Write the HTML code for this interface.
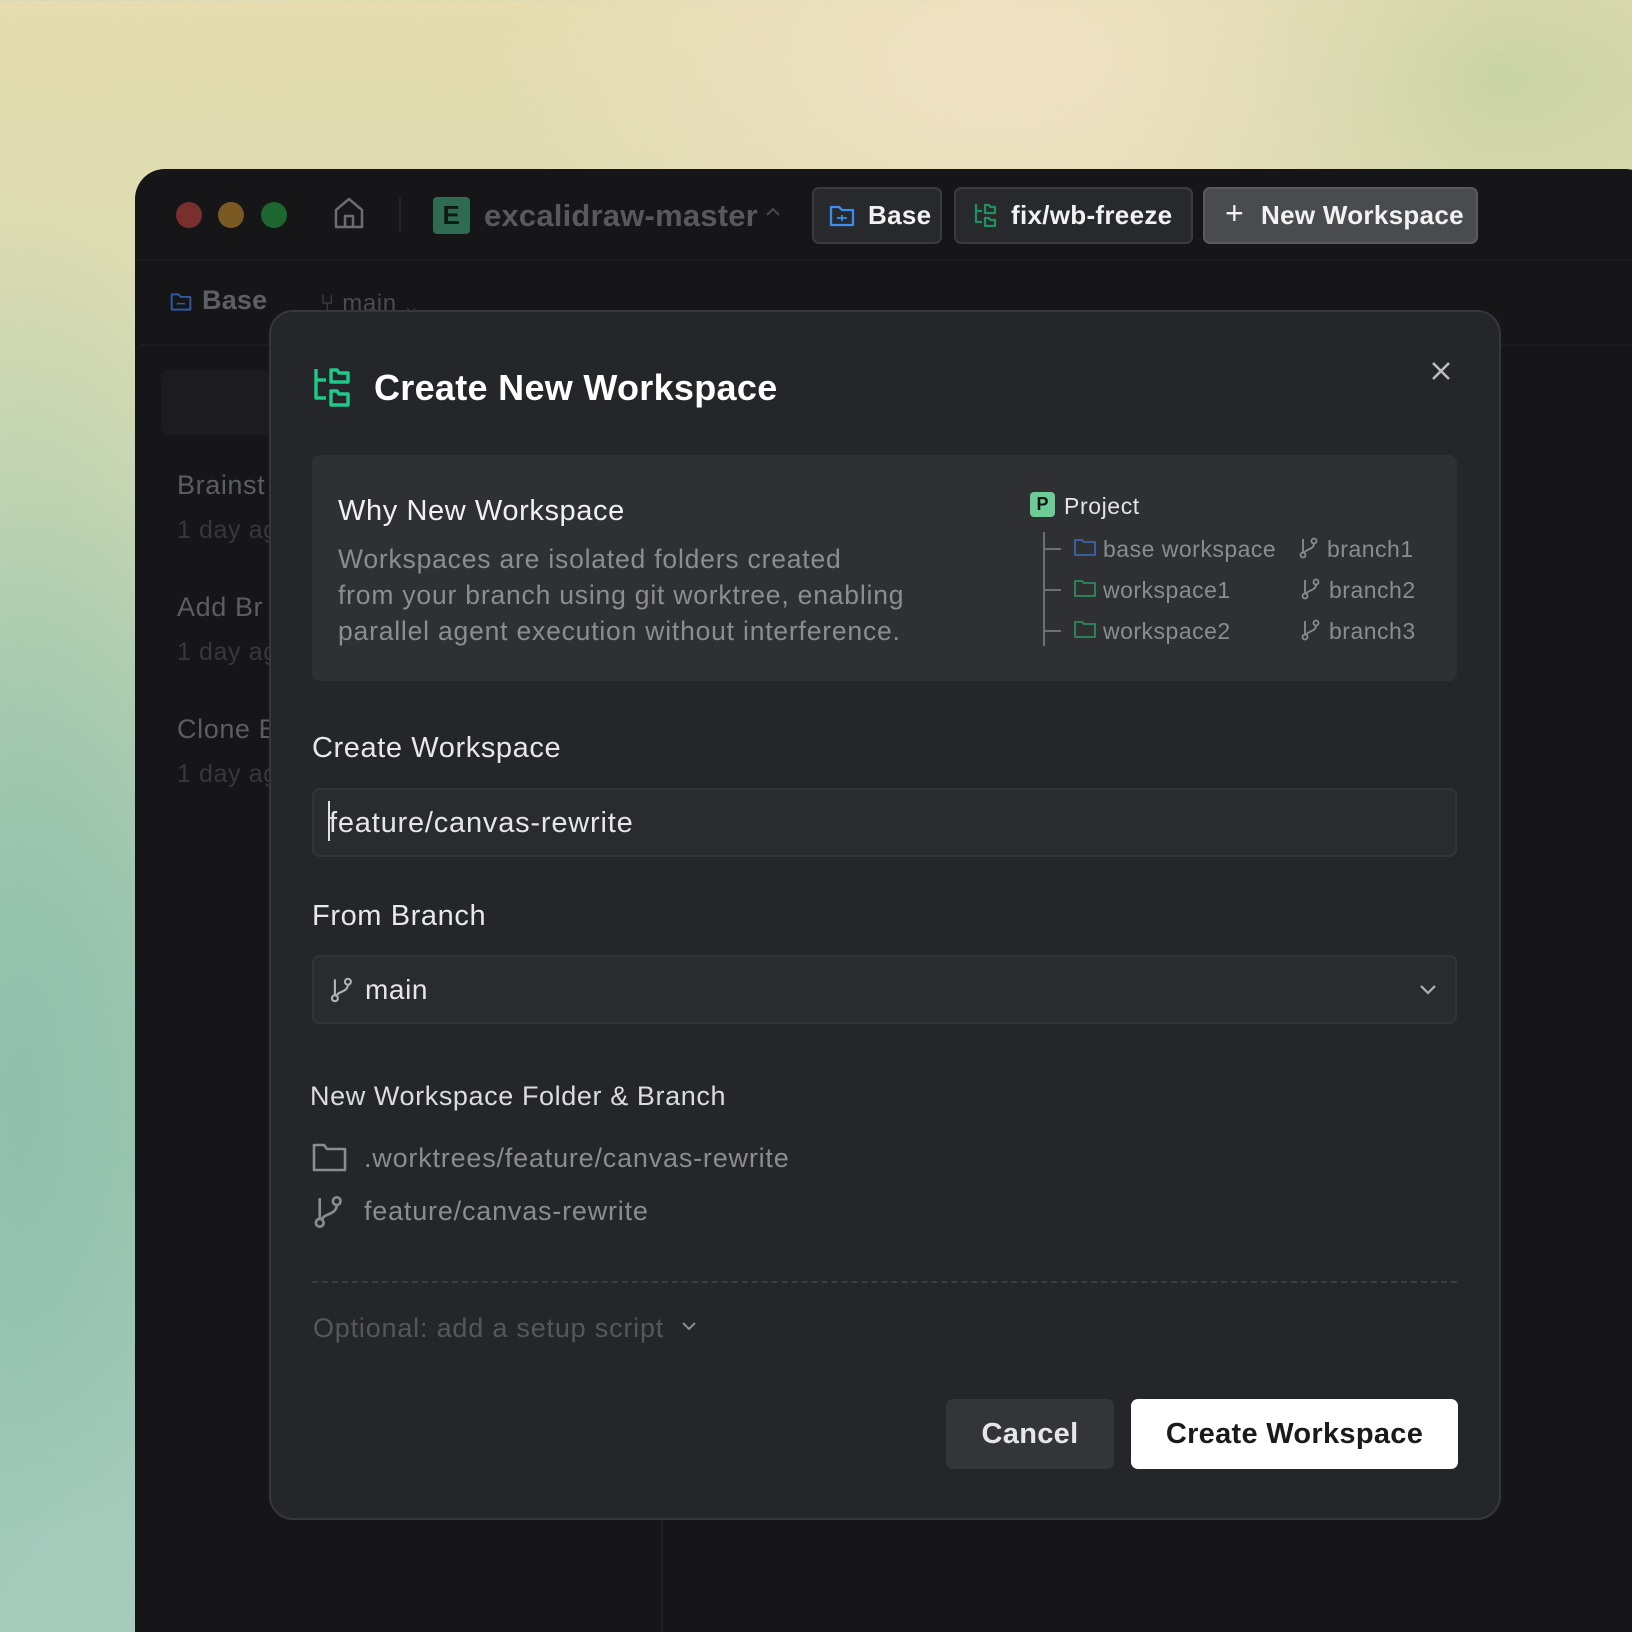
<!DOCTYPE html>
<html><head><meta charset="utf-8">
<style>
*{margin:0;padding:0;box-sizing:border-box}
html,body{width:1632px;height:1632px;overflow:hidden}
body{position:relative;font-family:"Liberation Sans",Arial,sans-serif;letter-spacing:0.6px;
background:
radial-gradient(ellipse 500px 300px at 1000px 60px,#efe2c4 0%,rgba(239,226,196,0) 100%),
radial-gradient(ellipse 400px 200px at 1500px 80px,#c9d3a5 0%,rgba(201,211,165,0) 100%),
radial-gradient(ellipse 300px 900px at 20px 1100px,#8fc0ac 0%,rgba(143,192,172,0) 100%),
radial-gradient(ellipse 300px 400px at 60px 1550px,#b9d5cc 0%,rgba(185,213,204,0) 100%),
linear-gradient(180deg,#e5dcb0 0%,#d6dcb4 30%,#a9cbb3 60%,#9ec6b4 100%);}
.a{position:absolute}
.win{left:135px;top:169px;width:1520px;height:1500px;background:#161618;border-radius:30px;}
.dot{width:26px;height:26px;border-radius:50%;top:202px}
.tab{top:187px;height:57px;border-radius:7px;border:2px solid #3a3b3f;background:#28292c;color:#f2f2f2;font-weight:bold;font-size:26px;display:flex;align-items:center;letter-spacing:0.3px}
.dlg{left:269px;top:310px;width:1232px;height:1210px;background:#252629;border:2px solid #36373a;border-radius:24px}
.lbl{color:#e8e8e8;font-size:28px}
.gray{color:#8b8c8f;letter-spacing:0.8px}
.field{left:312px;width:1145px;height:69px;background:#2a2b2e;border:2px solid #333438;border-radius:8px}
</style></head><body>
<div class="a win"></div>
<!-- titlebar -->
<div class="a dot" style="left:176px;background:#7a2f2f"></div>
<div class="a dot" style="left:218px;background:#7a5a22"></div>
<div class="a dot" style="left:261px;background:#1e6630"></div>
<svg class="a" style="left:333px;top:196px" width="32" height="34" viewBox="0 0 32 34" fill="none" stroke="#6b6c70" stroke-width="2.5" stroke-linejoin="round"><path d="M3 14 L16 3 L29 14 V31 H3 Z"/><path d="M12 31 V20 H20 V31"/></svg>
<div class="a" style="left:399px;top:198px;width:2px;height:34px;background:#26272a"></div>
<div class="a" style="left:433px;top:197px;width:37px;height:37px;background:#2f6a52;border-radius:4px;color:#0e1a14;font-weight:bold;font-size:26px;text-align:center;line-height:37px">E</div>
<div class="a" style="left:484px;top:197px;font-size:31px;font-weight:bold;color:#59595c;line-height:37px;letter-spacing:0.2px">excalidraw-master</div>
<svg class="a" style="left:764px;top:206px" width="18" height="12" viewBox="0 0 18 12" fill="none" stroke="#4a4a4e" stroke-width="2"><path d="M3 9 L9 3 L15 9"/></svg>
<div class="a tab" style="left:812px;width:130px;padding-left:14px">
<svg width="28" height="26" viewBox="0 0 28 26" fill="none" stroke="#3b8cf0" stroke-width="2.3" stroke-linejoin="round"><path d="M3 4 H11 L14 7 H25 V22 H3 Z"/><path d="M9 15 H19 M14 12 L14 18" stroke-width="1.8"/></svg>
<span style="margin-left:12px">Base</span></div>
<div class="a tab" style="left:954px;width:239px;padding-left:17px">
<svg width="26" height="28" viewBox="0 0 26 28" fill="none" stroke="#23915f" stroke-width="2.2" stroke-linejoin="round"><path d="M3 2 V20 H9 M3 9 H9"/><path d="M12 3 H16 L17.5 5 H22 V11 H12 Z M12 16 H16 L17.5 18 H22 V24 H12 Z"/></svg>
<span style="margin-left:12px">fix/wb-freeze</span></div>
<div class="a tab" style="left:1203px;width:275px;padding-left:20px;background:#4a4b4e;border-color:#5a5b5e">
<span style="font-weight:normal;font-size:32px;margin-top:-4px">+</span><span style="margin-left:17px">New Workspace</span></div>
<div class="a" style="left:135px;top:259px;width:1520px;height:2px;background:#1d1d20"></div>
<!-- second bar -->
<svg class="a" style="left:169px;top:291px" width="24" height="22" viewBox="0 0 28 26" fill="none" stroke="#2d5aa0" stroke-width="2.3" stroke-linejoin="round"><path d="M3 4 H11 L14 7 H25 V22 H3 Z"/><path d="M9 15 H19" stroke-width="1.8"/></svg>
<div class="a" style="left:202px;top:285px;font-size:27px;font-weight:bold;color:#5e5f63;letter-spacing:0.2px">Base</div>
<div class="a" style="left:320px;top:290px;font-size:24px;color:#4a4b4e">⑂ main ⌄</div>
<div class="a" style="left:140px;top:344px;width:1515px;height:2px;background:#1c1c1f"></div>
<!-- sidebar -->
<div class="a" style="left:161px;top:370px;width:150px;height:65px;background:#1c1c1f;border-radius:8px"></div>
<div class="a" style="left:177px;top:470px;font-size:27px;color:#5c5d60">Brainst</div>
<div class="a" style="left:177px;top:516px;font-size:25px;color:#37383b">1 day ag</div>
<div class="a" style="left:177px;top:592px;font-size:27px;color:#5c5d60">Add Br</div>
<div class="a" style="left:177px;top:638px;font-size:25px;color:#37383b">1 day ag</div>
<div class="a" style="left:177px;top:714px;font-size:27px;color:#5c5d60">Clone E</div>
<div class="a" style="left:177px;top:760px;font-size:25px;color:#37383b">1 day ag</div>
<div class="a" style="left:661px;top:1520px;width:2px;height:112px;background:#222225"></div>
<!-- dialog -->
<div class="a dlg"></div>
<svg class="a" style="left:313px;top:367px" width="40" height="42" viewBox="0 0 40 42" fill="none" stroke="#1fc98a" stroke-width="3.4" stroke-linejoin="round"><path d="M3 2 V31 H13 M3 13 H13"/><path d="M18 3 H24 L26 6 H35 V15 H18 Z M18 24 H24 L26 27 H35 V38 H18 Z"/></svg>
<div class="a" style="left:374px;top:367px;font-size:36px;font-weight:bold;color:#fff;letter-spacing:0.3px">Create New Workspace</div>
<svg class="a" style="left:1431px;top:361px" width="20" height="20" viewBox="0 0 20 20" stroke="#bdbdbf" stroke-width="2.6"><path d="M2 2 L18 18 M18 2 L2 18"/></svg>
<!-- info box -->
<div class="a" style="left:312px;top:455px;width:1145px;height:226px;background:#2f3033;border-radius:8px"></div>
<div class="a lbl" style="left:338px;top:495px;font-size:29px;color:#f0f0f0">Why New Workspace</div>
<div class="a gray" style="left:338px;top:541px;font-size:26.5px;line-height:36px;color:#8c8d90">Workspaces are isolated folders created<br>from your branch using git worktree, enabling<br>parallel agent execution without interference.</div>
<div class="a" style="left:1030px;top:492px;width:25px;height:25px;background:#6ecb96;border-radius:4px;color:#0c1a12;font-weight:bold;font-size:18px;text-align:center;line-height:25px;letter-spacing:0">P</div>
<div class="a" style="left:1064px;top:493px;font-size:23px;color:#e4e4e4">Project</div>
<div class="a" style="left:1043px;top:532px;width:2px;height:114px;background:#6e6f72"></div>
<div class="a" style="left:1043px;top:548px;width:18px;height:2px;background:#6e6f72"></div>
<div class="a" style="left:1043px;top:589px;width:18px;height:2px;background:#6e6f72"></div>
<div class="a" style="left:1043px;top:630px;width:18px;height:2px;background:#6e6f72"></div>
<svg class="a" style="left:1074px;top:538px" width="22" height="18" viewBox="0 0 22 18" fill="none" stroke="#3a66a6" stroke-width="1.8" stroke-linejoin="round"><path d="M1 2 H8 L10 4 H21 V17 H1 Z"/></svg>
<svg class="a" style="left:1074px;top:579px" width="22" height="18" viewBox="0 0 22 18" fill="none" stroke="#2f8a5c" stroke-width="1.8" stroke-linejoin="round"><path d="M1 2 H8 L10 4 H21 V17 H1 Z"/></svg>
<svg class="a" style="left:1074px;top:620px" width="22" height="18" viewBox="0 0 22 18" fill="none" stroke="#2f8a5c" stroke-width="1.8" stroke-linejoin="round"><path d="M1 2 H8 L10 4 H21 V17 H1 Z"/></svg>
<div class="a gray" style="left:1103px;top:535px;font-size:23px;line-height:28px;letter-spacing:0.5px">base workspace</div>
<div class="a gray" style="left:1103px;top:576px;font-size:23px;line-height:28px;letter-spacing:0.5px">workspace1</div>
<div class="a gray" style="left:1103px;top:617px;font-size:23px;line-height:28px;letter-spacing:0.5px">workspace2</div>
<svg class="a" style="left:1299px;top:537px" width="20" height="22" viewBox="0 0 20 22" fill="none" stroke="#8b8c8f" stroke-width="1.8"><circle cx="4" cy="18" r="2.5"/><circle cx="15" cy="4" r="2.5"/><path d="M4 2 V15.5 M15 6.5 C15 13 6 12 5.5 16"/></svg>
<svg class="a" style="left:1301px;top:578px" width="20" height="22" viewBox="0 0 20 22" fill="none" stroke="#8b8c8f" stroke-width="1.8"><circle cx="4" cy="18" r="2.5"/><circle cx="15" cy="4" r="2.5"/><path d="M4 2 V15.5 M15 6.5 C15 13 6 12 5.5 16"/></svg>
<svg class="a" style="left:1301px;top:619px" width="20" height="22" viewBox="0 0 20 22" fill="none" stroke="#8b8c8f" stroke-width="1.8"><circle cx="4" cy="18" r="2.5"/><circle cx="15" cy="4" r="2.5"/><path d="M4 2 V15.5 M15 6.5 C15 13 6 12 5.5 16"/></svg>
<div class="a gray" style="left:1327px;top:535px;font-size:23px;line-height:28px;letter-spacing:0.5px">branch1</div>
<div class="a gray" style="left:1329px;top:576px;font-size:23px;line-height:28px;letter-spacing:0.5px">branch2</div>
<div class="a gray" style="left:1329px;top:617px;font-size:23px;line-height:28px;letter-spacing:0.5px">branch3</div>
<!-- create workspace -->
<div class="a lbl" style="left:312px;top:732px;font-size:29px">Create Workspace</div>
<div class="a field" style="top:788px"></div>
<div class="a" style="left:328px;top:801px;width:2px;height:40px;background:#e0e0e0"></div>
<div class="a" style="left:329px;top:807px;font-size:29px;color:#e6e6e6;letter-spacing:0.8px">feature/canvas-rewrite</div>
<div class="a lbl" style="left:312px;top:900px;font-size:29px">From Branch</div>
<div class="a field" style="top:955px"></div>
<svg class="a" style="left:330px;top:977px" width="24" height="26" viewBox="0 0 20 22" fill="none" stroke="#b0b1b4" stroke-width="1.8"><circle cx="4" cy="18" r="2.5"/><circle cx="15" cy="4" r="2.5"/><path d="M4 2 V15.5 M15 6.5 C15 13 6 12 5.5 16"/></svg>
<div class="a" style="left:365px;top:974px;font-size:28px;color:#e6e6e6">main</div>
<svg class="a" style="left:1418px;top:982px" width="20" height="14" viewBox="0 0 20 14" fill="none" stroke="#b0b1b4" stroke-width="2.2"><path d="M3 4 L10 11 L17 4"/></svg>
<!-- new ws folder -->
<div class="a" style="left:310px;top:1081px;font-size:27px;color:#dcdcdc">New Workspace Folder &amp; Branch</div>
<svg class="a" style="left:312px;top:1142px" width="35" height="30" viewBox="0 0 35 30" fill="none" stroke="#8b8c8f" stroke-width="2.6" stroke-linejoin="round"><path d="M2 3 H12 L15 7 H33 V28 H2 Z"/></svg>
<div class="a gray" style="left:364px;top:1143px;font-size:27px">.worktrees/feature/canvas-rewrite</div>
<svg class="a" style="left:313px;top:1195px" width="32" height="34" viewBox="0 0 20 22" fill="none" stroke="#8b8c8f" stroke-width="1.7"><circle cx="4" cy="18" r="2.5"/><circle cx="15" cy="4" r="2.5"/><path d="M4 2 V15.5 M15 6.5 C15 13 6 12 5.5 16"/></svg>
<div class="a gray" style="left:364px;top:1196px;font-size:27px">feature/canvas-rewrite</div>
<div class="a" style="left:312px;top:1281px;width:1145px;border-top:2px dashed #3c3d40"></div>
<div class="a" style="left:313px;top:1313px;font-size:27px;color:#56575a;letter-spacing:0.8px">Optional: add a setup script</div>
<svg class="a" style="left:680px;top:1320px" width="18" height="12" viewBox="0 0 18 12" fill="none" stroke="#8b8c8f" stroke-width="2"><path d="M3 3 L9 9 L15 3"/></svg>
<!-- buttons -->
<div class="a" style="left:946px;top:1399px;width:168px;height:70px;background:#343538;border-radius:7px;color:#e6e6e6;font-size:29px;font-weight:bold;text-align:center;line-height:70px;letter-spacing:0.3px">Cancel</div>
<div class="a" style="left:1131px;top:1399px;width:327px;height:70px;background:#fff;border-radius:7px;color:#1a1a1c;font-size:29px;font-weight:bold;text-align:center;line-height:70px;letter-spacing:0.3px">Create Workspace</div>
</body></html>
